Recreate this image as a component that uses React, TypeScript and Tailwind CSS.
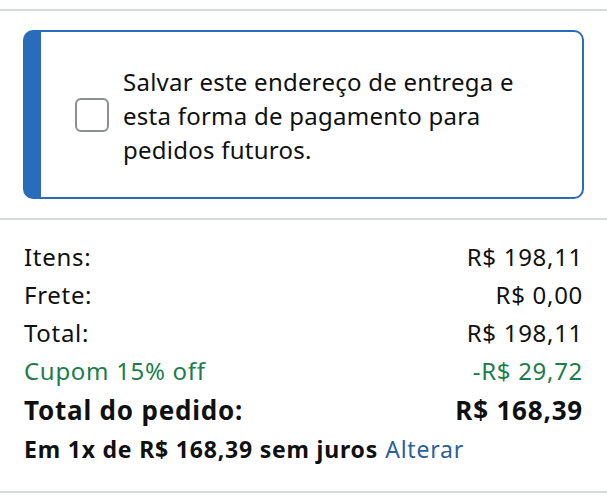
export default function App() {
  const rows = [
    { label: "Itens:", value: "R$ 198,11" },
    { label: "Frete:", value: "R$ 0,00" },
    { label: "Total:", value: "R$ 198,11" },
  ]

  return (
    <div className="w-[607px] h-[500px] bg-white text-[#0f1111] font-['Noto_Sans',sans-serif] overflow-hidden">
      <div className="h-[2px] mt-[9px] bg-[#d5d9d9]" />

      {/* Save checkbox card */}
      <div className="mx-[23px] mt-[19px] h-[169px] flex items-center rounded-[10px] border-2 border-l-[18px] border-[#2a6cba]">
        <div className="ml-[34px] w-[34px] h-[34px] shrink-0 rounded-[6px] border-2 border-[#8b8f8f] bg-white" />
        <p className="ml-[14px] w-[410px] pt-[3px] text-[24px] leading-[34px] tracking-[0.25px]">
          Salvar este endereço de entrega e esta forma de pagamento para pedidos futuros.
        </p>
      </div>

      <div className="h-[2px] mt-[19px] bg-[#d5d9d9]" />

      {/* Order summary */}
      <div className="px-[24px] pt-[18px] text-[24px] tracking-[0.7px]">
        {rows.map((r) => (
          <div key={r.label} className="flex justify-between h-[38px] items-center">
            <span>{r.label}</span>
            <span>{r.value}</span>
          </div>
        ))}
        <div className="flex justify-between h-[38px] items-center text-[#1d7d4a]">
          <span>Cupom 15% off</span>
          <span>-R$ 29,72</span>
        </div>
        <div className="flex justify-between h-[40px] items-center text-[26px] font-bold tracking-[0.8px]">
          <span>Total do pedido:</span>
          <span>R$ 168,39</span>
        </div>
        <div className="h-[38px] flex items-center text-[23px] tracking-[0.8px]">
          <span className="font-bold">Em 1x de R$ 168,39 sem juros</span>
          <span className="ml-[7px] text-[#2b5f9e]">Alterar</span>
        </div>
      </div>

      <div className="h-[2px] mt-[23px] bg-[#d5d9d9]" />
    </div>
  )
}
